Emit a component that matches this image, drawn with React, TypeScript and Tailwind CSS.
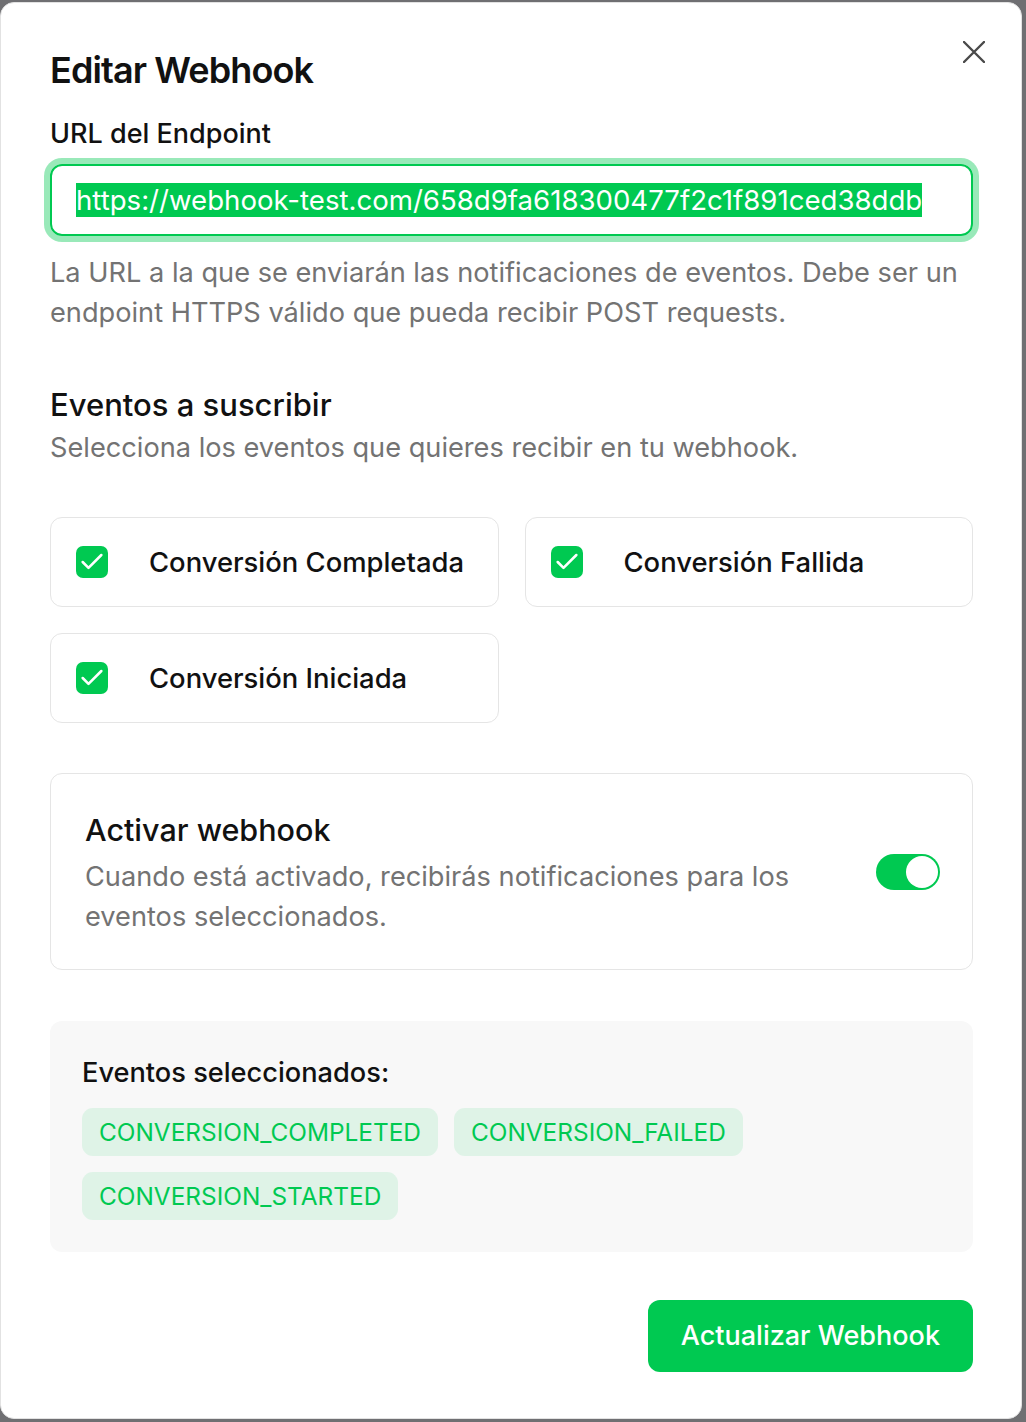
import { Check } from "lucide-react";

const events = [
  { label: "Conversión Completada", code: "CONVERSION_COMPLETED" },
  { label: "Conversión Fallida", code: "CONVERSION_FAILED" },
  { label: "Conversión Iniciada", code: "CONVERSION_STARTED" },
];

function EventCard({ label }: { label: string }) {
  return (
    <label className="flex h-[90px] items-center rounded-xl border border-[#e5e5e5] bg-white pl-[25px] pr-6">
      <span className="flex size-8 shrink-0 items-center justify-center rounded-[7px] bg-green-500">
        <Check size={28} strokeWidth={2.2} className="text-white" />
      </span>
      <span className="ml-[41px] text-[27.4px] font-medium leading-10 text-[#111]">
        {label}
      </span>
    </label>
  );
}

export default function App() {
  return (
    <div className="min-h-[1422px] bg-[#6f6f72] pt-[2px] font-['Inter',sans-serif]">
      <div className="relative h-[1417px] w-[1022px] rounded-[14px] border border-[#e2e2e2] bg-white pl-[49px] pr-[48px] pt-[47px]">
        <button
          type="button"
          className="absolute right-[33px] top-[35px] flex size-7 items-center justify-center text-[#4a4a4a]"
          aria-label="Cerrar"
        >
          <svg width="22" height="22" viewBox="0 0 22 22" fill="none">
            <path d="M1 1 21 21M21 1 1 21" stroke="currentColor" strokeWidth="2.4" strokeLinecap="round" />
          </svg>
        </button>

        <h2 className="text-[36px] font-semibold leading-10 tracking-[-0.025em] text-[#111]">
          Editar Webhook
        </h2>

        <div className="mt-6 text-[27px] font-medium leading-10 text-[#111]">
          URL del Endpoint
        </div>
        <div className="mt-[10px] flex h-[72px] items-center rounded-xl border-2 border-green-500 pl-[24px] ring-[6px] ring-green-500/40">
          <span className="bg-green-500 text-[27.6px] leading-[34px] text-white">
            https://webhook-test.com/658d9fa618300477f2c1f891ced38ddb
          </span>
        </div>
        <p className="mt-[17px] text-[27.2px] leading-10 text-[#737373]">
          La URL a la que se enviarán las notificaciones de eventos. Debe ser un
          endpoint HTTPS válido que pueda recibir POST requests.
        </p>

        <h3 className="mt-[52px] text-[31px] font-medium leading-10 text-[#111]">
          Eventos a suscribir
        </h3>
        <p className="mt-[3px] text-[27.2px] leading-10 text-[#737373]">
          Selecciona los eventos que quieres recibir en tu webhook.
        </p>

        <div className="mt-[49px] grid grid-cols-2 gap-[26px]">
          {events.map((e) => (
            <EventCard key={e.code} label={e.label} />
          ))}
        </div>

        <div className="mt-[50px] flex items-center gap-6 rounded-xl border border-[#e5e5e5] py-8 pl-[34px] pr-8">
          <div className="flex-1">
            <div className="text-[30.5px] font-medium leading-[48px] text-[#111]">
              Activar webhook
            </div>
            <p className="mt-[3px] pr-[40px] text-[27.2px] leading-10 text-[#737373]">
              Cuando está activado, recibirás notificaciones para los eventos
              seleccionados.
            </p>
          </div>
          <button
            type="button"
            role="switch"
            aria-checked
            className="flex h-9 w-16 shrink-0 items-center justify-end rounded-full bg-green-500 p-0.5"
          >
            <span className="size-8 rounded-full bg-white" />
          </button>
        </div>

        <div className="mt-[51px] rounded-xl bg-[#f8f8f8] p-8">
          <div className="text-[27.2px] font-medium leading-10 text-[#111]">
            Eventos seleccionados:
          </div>
          <div className="mt-[15px] flex flex-wrap gap-4">
            {events.map((e) => (
              <span
                key={e.code}
                className="flex h-12 items-center rounded-[11px] bg-green-500/10 px-[17px] text-[24.4px] text-green-500"
              >
                {e.code}
              </span>
            ))}
          </div>
        </div>

        <div className="mt-[48px] flex justify-end">
          <button
            type="button"
            className="h-[72px] rounded-xl bg-green-500 px-[33px] text-[27px] font-medium text-white"
          >
            Actualizar Webhook
          </button>
        </div>
      </div>
    </div>
  );
}
